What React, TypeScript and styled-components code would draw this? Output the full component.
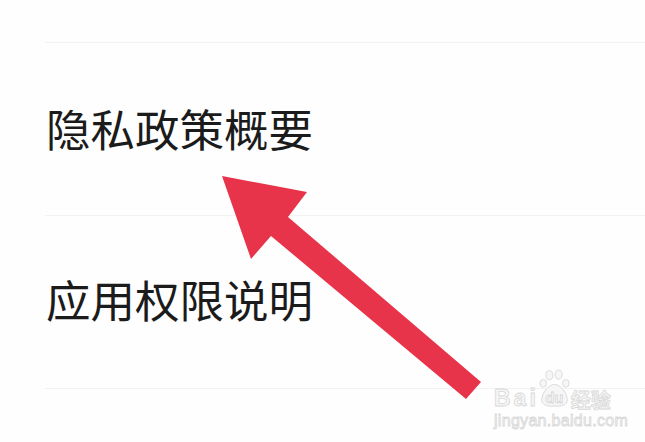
import React from "react";
import styled, { createGlobalStyle } from "styled-components";

const Global = createGlobalStyle`
  html, body { margin: 0; padding: 0; background: #fefefe; }
  body { width: 645px; height: 442px; overflow: hidden; }
`;

const Page = styled.div`
  position: relative;
  width: 645px;
  height: 442px;
  padding-top: 42px;
  box-sizing: border-box;
  background: #fefefe;
  font-family: "Noto Sans CJK SC", "Noto Sans", sans-serif;
`;

const List = styled.div`
  display: flex;
  flex-direction: column;
  margin-left: 45px;
  border-top: 1px solid #f2f2f2;
`;

const Row = styled.div`
  display: flex;
  align-items: center;
  border-bottom: 1px solid #f2f2f2;
  box-sizing: border-box;
  height: 173px;
`;

const Label = styled.span<{ $shift?: number }>`
  font-size: 44.5px;
  line-height: 1;
  color: #1b1b1b;
  margin-left: 1px;
  margin-top: ${(p) => p.$shift ?? 0}px;
`;

const ArrowSvg = styled.svg`
  position: absolute;
  left: 0;
  top: 0;
  pointer-events: none;
`;

const Watermark = styled.div`
  position: absolute;
  left: 494px;
  top: 369px;
  display: flex;
  flex-direction: column;
  align-items: flex-start;
  color: #f6f6f6;
  -webkit-text-stroke: 0.8px #d8d8d8;
  font-family: "Liberation Sans", Arial, sans-serif;
`;

const Brand = styled.div`
  display: flex;
  align-items: flex-end;
  height: 39px;
`;

const BrandText = styled.span`
  font-size: 23px;
  font-weight: bold;
  line-height: 1;
  letter-spacing: 3px;
  margin-bottom: -2px;
`;

const Paw = styled.div`
  position: relative;
  width: 31px;
  height: 39px;
  display: flex;
  align-items: flex-end;
  justify-content: center;
`;

const PawSvg = styled.svg`
  position: absolute;
  left: 0;
  top: 0;
`;

const DuText = styled.span`
  position: relative;
  font-size: 15px;
  font-weight: bold;
  line-height: 1;
  margin-bottom: 3px;
`;

const Jy = styled.span`
  font-family: "Noto Sans CJK SC", sans-serif;
  font-size: 20px;
  font-weight: bold;
  line-height: 1;
  margin-left: 1px;
  margin-bottom: -2px;
`;

const Url = styled.span`
  font-size: 16px;
  line-height: 1;
  margin-top: 5px;
  letter-spacing: 0.3px;
`;

export default function App() {
  return (
    <>
      <Global />
      <Page>
        <List>
          <Row>
            <Label $shift={-2}>隐私政策概要</Label>
          </Row>
          <Row>
            <Label $shift={-6}>应用权限说明</Label>
          </Row>
        </List>
        <ArrowSvg width="645" height="442" viewBox="0 0 645 442">
          <polygon
            points="222,176 307,192 288,217 481,382 466,399 271,236 251,259"
            fill="#e8344a"
          />
        </ArrowSvg>
        <Watermark>
          <Brand>
            <BrandText>Bai</BrandText>
            <Paw>
              <PawSvg width="31" height="39" viewBox="0 0 30 38">
                <g fill="#f6f6f6" stroke="#d8d8d8" strokeWidth="0.9">
                  <ellipse cx="10" cy="6" rx="3.4" ry="4.4" />
                  <ellipse cx="19" cy="5.5" rx="3.4" ry="4.4" />
                  <ellipse cx="4" cy="14" rx="3.2" ry="3.8" />
                  <ellipse cx="26" cy="14" rx="3.2" ry="3.8" />
                  <path d="M15 15 C9 15 2.5 24 2.5 30 C2.5 35 8 37 15 36 C22 37 27.5 35 27.5 30 C27.5 24 21 15 15 15 Z" />
                </g>
              </PawSvg>
              <DuText>du</DuText>
            </Paw>
            <Jy>经验</Jy>
          </Brand>
          <Url>jingyan.baidu.com</Url>
        </Watermark>
      </Page>
    </>
  );
}
